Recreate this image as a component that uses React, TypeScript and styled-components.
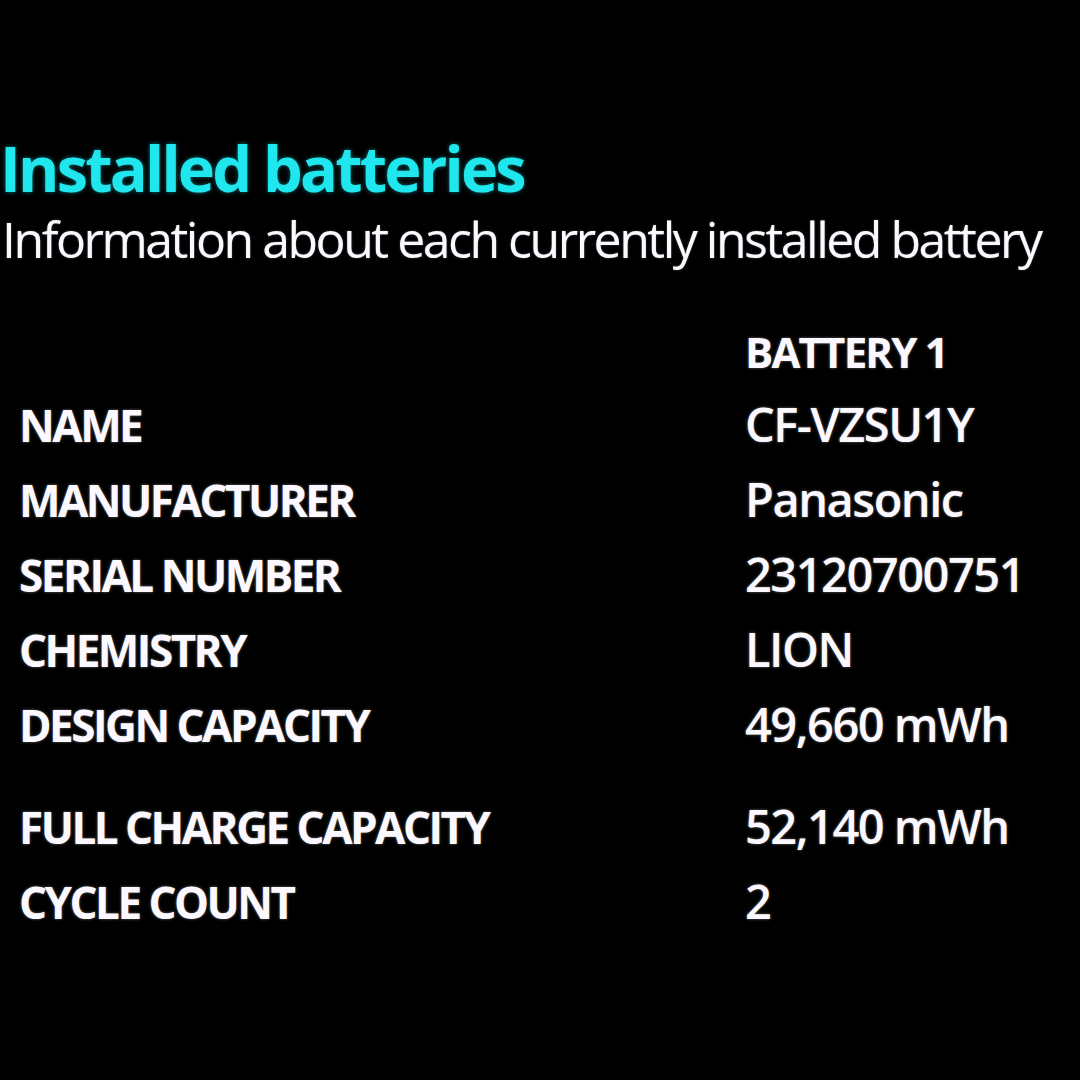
import React from "react";
import styled, { createGlobalStyle } from "styled-components";

const Global = createGlobalStyle`
  html, body { margin: 0; padding: 0; background: #000; }
  body {
    font-family: "Open Sans", "Noto Sans", "DejaVu Sans", sans-serif;
    color: #fbf9ff;
    -webkit-font-smoothing: antialiased;
  }
`;

const Page = styled.main`
  width: 1080px;
  height: 1080px;
  box-sizing: border-box;
  padding-top: 136px;
  background: #000;
  overflow: hidden;
`;

const Title = styled.h1`
  margin: 0;
  font-size: 63px;
  line-height: 63px;
  font-weight: 700;
  letter-spacing: -2.8px;
  color: #20e6ee;
  text-shadow: 0 0 4px rgba(32, 230, 238, 0.5);
`;

const Subtitle = styled.p`
  margin: 15px 0 0 2px;
  font-size: 50px;
  line-height: 50px;
  font-weight: 400;
  letter-spacing: -2.5px;
  white-space: nowrap;
  text-shadow: 0 0 2px rgba(255, 255, 255, 0.35);
`;

const Table = styled.section`
  margin-top: 62px;
  display: flex;
  flex-direction: column;
`;

const Row = styled.div<{ $spaced?: boolean; $header?: boolean }>`
  display: grid;
  grid-template-columns: 726px 1fr;
  align-items: baseline;
  height: 75px;
  box-sizing: border-box;
  padding-left: 19px;
  padding-top: ${(p) => (p.$header ? "5px" : "0")};
  margin-top: ${(p) => (p.$spaced ? "27px" : "0")};
`;

const Label = styled.span`
  font-size: 44px;
  line-height: 1;
  font-weight: 700;
  letter-spacing: -2.5px;
  white-space: nowrap;
  text-shadow: 0 0 3px rgba(255, 255, 255, 0.4);
`;

const Value = styled.span<{ $header?: boolean }>`
  font-size: ${(p) => (p.$header ? "42px" : "47px")};
  line-height: 1;
  font-weight: ${(p) => (p.$header ? 700 : 600)};
  letter-spacing: ${(p) => (p.$header ? "-1.8px" : "-1.5px")};
  white-space: nowrap;
  text-shadow: 0 0 3px rgba(255, 255, 255, 0.4);
`;

const rows: { label: string; value: string; spaced?: boolean }[] = [
  { label: "NAME", value: "CF-VZSU1Y" },
  { label: "MANUFACTURER", value: "Panasonic" },
  { label: "SERIAL NUMBER", value: "23120700751" },
  { label: "CHEMISTRY", value: "LION" },
  { label: "DESIGN CAPACITY", value: "49,660 mWh" },
  { label: "FULL CHARGE CAPACITY", value: "52,140 mWh", spaced: true },
  { label: "CYCLE COUNT", value: "2" },
];

export default function App() {
  return (
    <>
      <Global />
      <Page>
        <Title>Installed batteries</Title>
        <Subtitle>Information about each currently installed battery</Subtitle>
        <Table>
          <Row $header>
            <Label />
            <Value $header>BATTERY 1</Value>
          </Row>
          {rows.map((r) => (
            <Row key={r.label} $spaced={r.spaced}>
              <Label>{r.label}</Label>
              <Value>{r.value}</Value>
            </Row>
          ))}
        </Table>
      </Page>
    </>
  );
}
